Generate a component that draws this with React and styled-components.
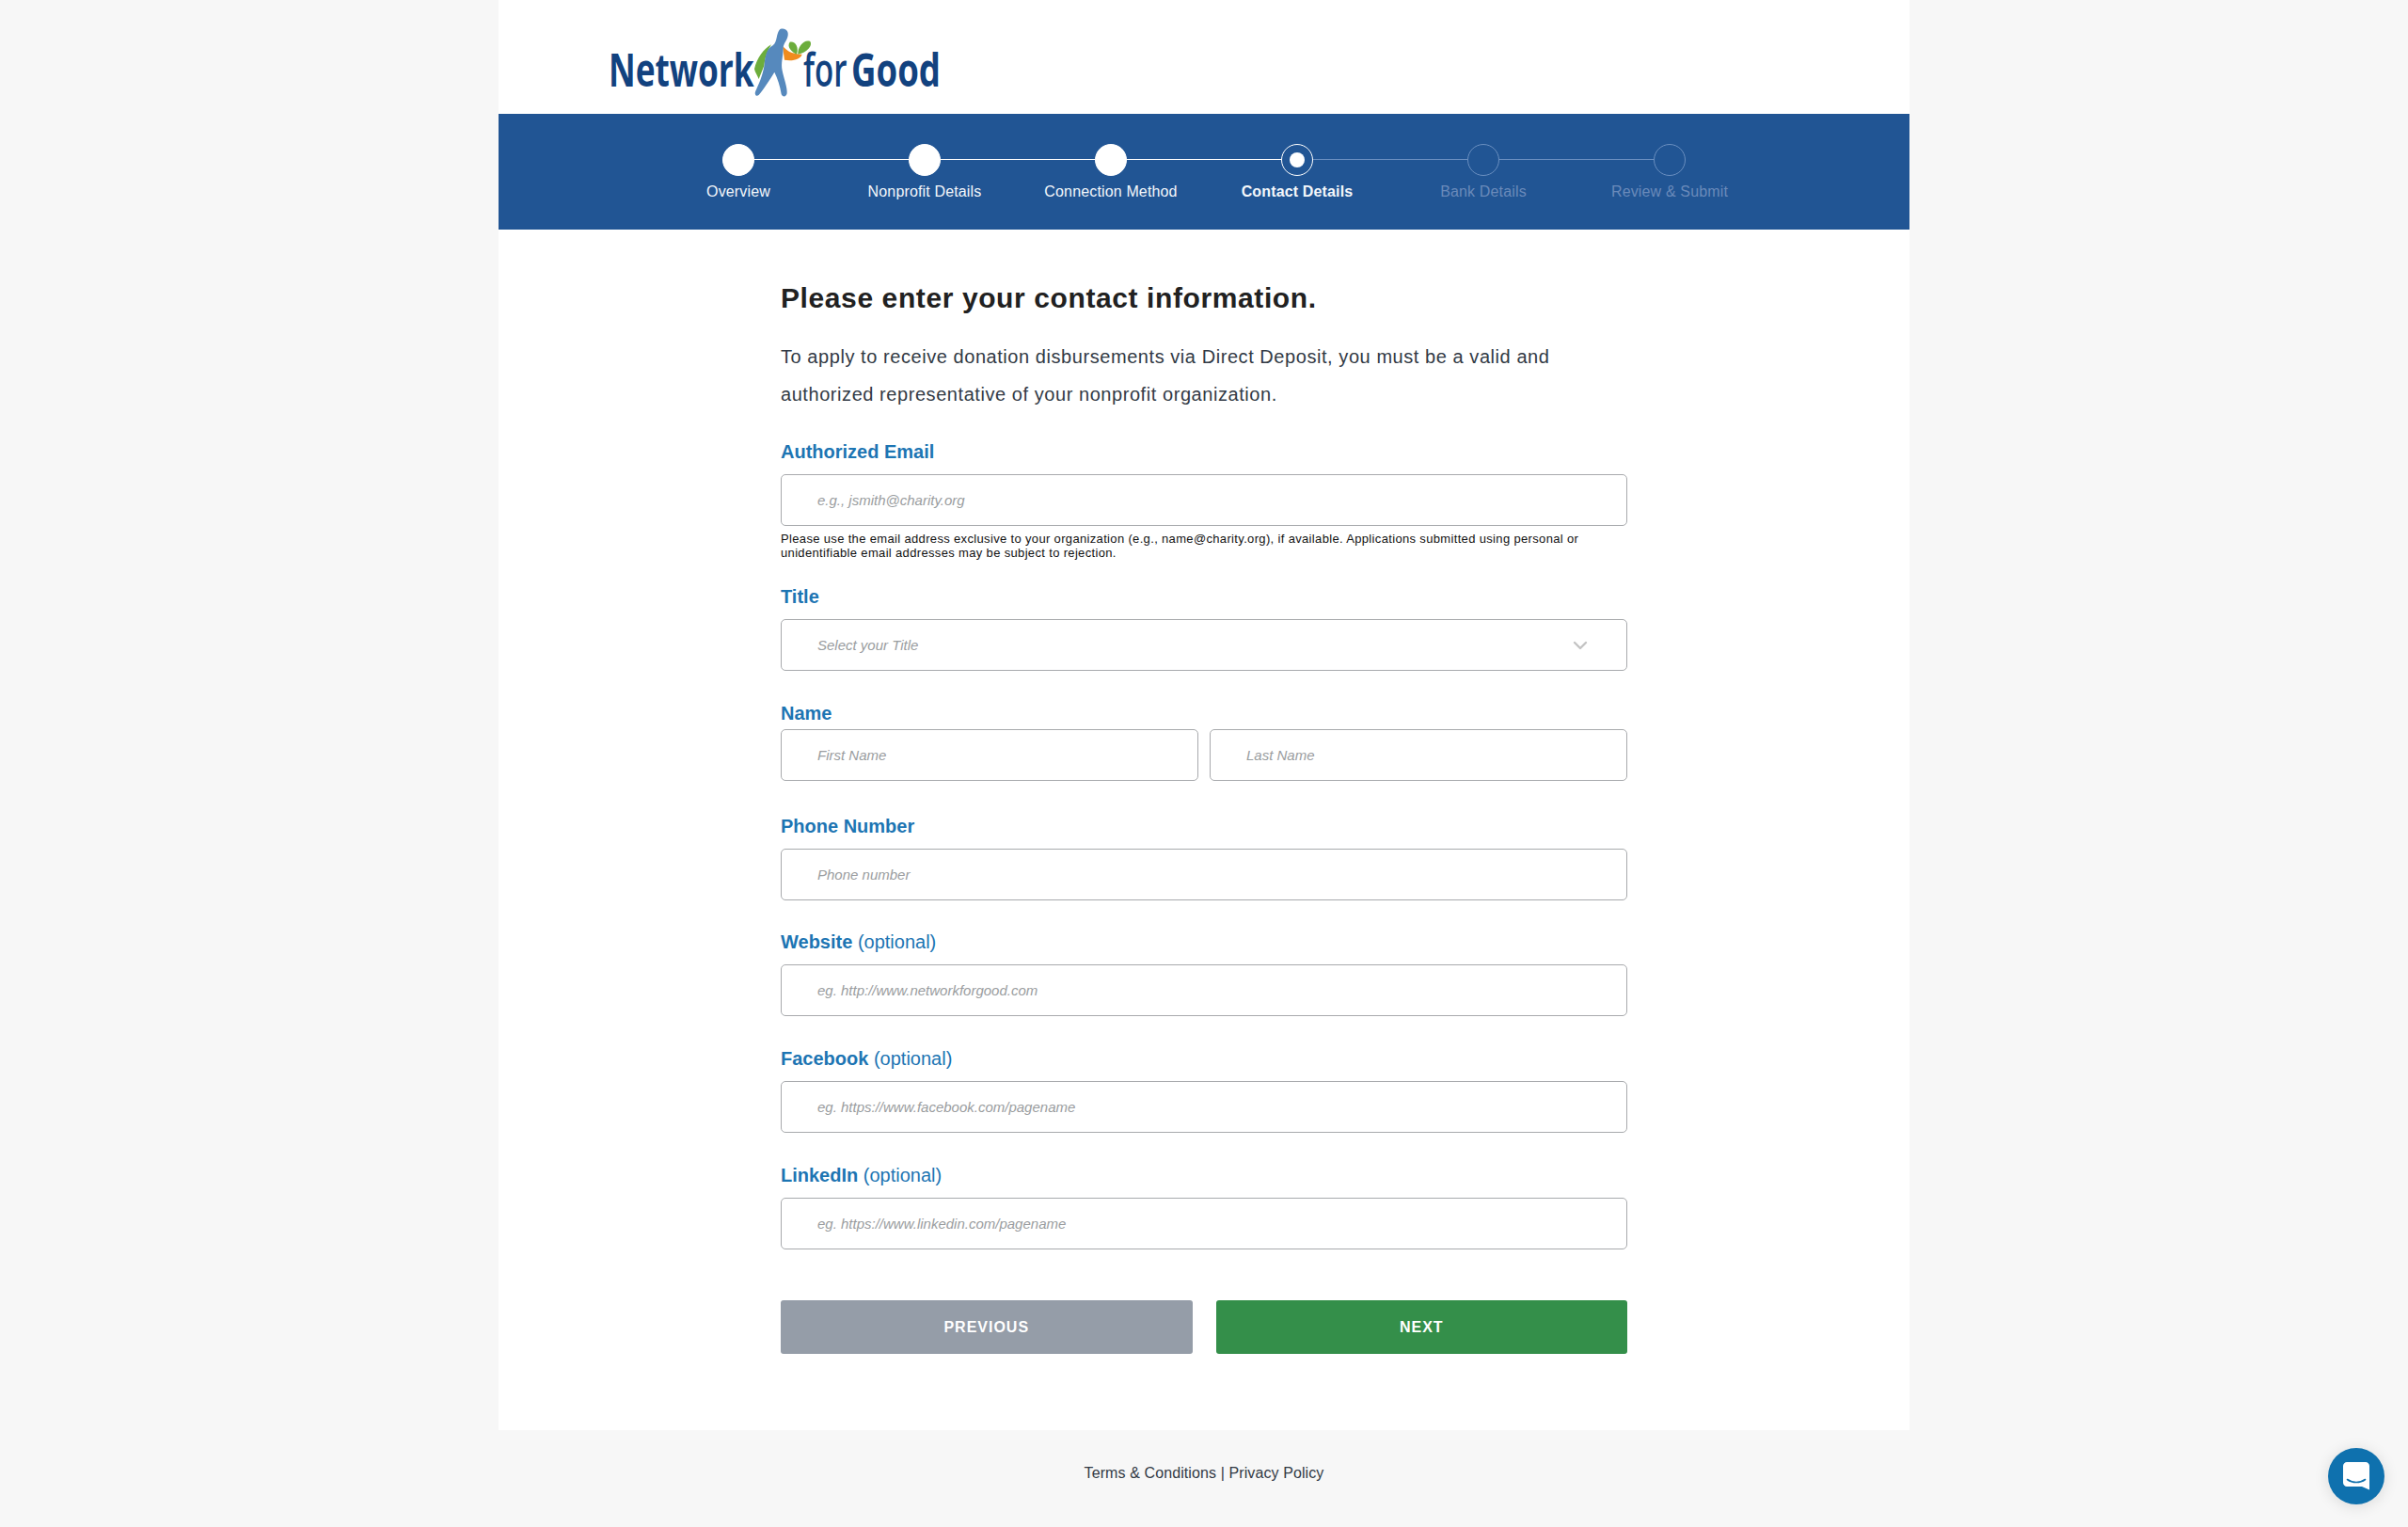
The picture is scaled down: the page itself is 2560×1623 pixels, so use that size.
import React from "react";
import styled, { createGlobalStyle } from "styled-components";
import { ChevronDown } from "lucide-react";

const GlobalStyle = createGlobalStyle`
  * { box-sizing: border-box; }
  html, body { margin: 0; background: #f7f7f7; }
  body { font-family: "Liberation Sans", Arial, sans-serif; }
`;

const steps = [
  { name: "Overview", state: "done" },
  { name: "Nonprofit Details", state: "done" },
  { name: "Connection Method", state: "done" },
  { name: "Contact Details", state: "current" },
  { name: "Bank Details", state: "todo" },
  { name: "Review & Submit", state: "todo" },
];

const Logo = () => (
  <StyledLogo viewBox="0 0 380 90" role="img" aria-label="Network for Good">
    <LogoText transform="translate(17 72) scale(0.735 1)" fontWeight="700">
      Network
    </LogoText>
    <LogoText transform="translate(224 72) scale(0.69 1)" fontWeight="600">
      for
    </LogoText>
    <LogoText transform="translate(275 72) scale(0.763 1)" fontWeight="700">
      Good
    </LogoText>
    <g transform="scale(0.3333)">
      <path d="M516 160C524 126 545 96 570 82C556 105 549 126 547 150L530 192C526 180 518 172 516 160Z" fill="#6cad3c" />
      <path d="M606 86C618 100 632 112 668 113C664 128 640 136 612 131Z" fill="#f08c1e" />
      <path d="M651 113C636 106 618 90 629 74C646 70 659 90 651 113Z" fill="#6cad3c" />
      <path d="M655 113C653 90 675 64 694 72C703 85 684 108 655 113Z" fill="#6cad3c" />
      <path
        d="M598 33C615 27 628 40 622 58C618 72 608 80 608 95C608 120 600 140 605 165C610 190 622 220 620 238C618 250 605 250 602 240C598 215 590 190 580 170C565 195 545 225 530 243C522 250 515 240 520 230C535 200 545 170 548 145C550 120 555 95 575 85C590 75 585 45 598 33Z"
        fill="#5689bd"
      />
    </g>
  </StyledLogo>
);

const TextField = ({ label, optional, placeholder, $top }) => (
  <Field $top={$top}>
    <Label>
      {label}
      {optional && <Optional> (optional)</Optional>}
    </Label>
    <Input placeholder={placeholder} />
  </Field>
);

const App = () => {
  return (
    <>
      <GlobalStyle />
      <Panel>
        <Header>
          <Logo />
        </Header>
        <Stepper>
          {steps.map((step, i) => (
            <Step key={step.name} $state={step.state} $last={i === steps.length - 1}>
              <Dot $state={step.state} />
              <StepName $state={step.state}>{step.name}</StepName>
            </Step>
          ))}
        </Stepper>
        <Main>
          <Heading>Please enter your contact information.</Heading>
          <Intro>
            To apply to receive donation disbursements via Direct Deposit, you must be a valid and
            authorized representative of your nonprofit organization.
          </Intro>
          <Field $top={29}>
            <Label>Authorized Email</Label>
            <Input placeholder="e.g., jsmith@charity.org" />
            <Hint>
              Please use the email address exclusive to your organization (e.g., name@charity.org), if
              available. Applications submitted using personal or unidentifiable email addresses may be
              subject to rejection.
            </Hint>
          </Field>
          <Field $top={27}>
            <Label>Title</Label>
            <SelectWrap>
              <Input as="div" $select>Select your Title</Input>
              <SelectArrow size={24} strokeWidth={2.4} />
            </SelectWrap>
          </Field>
          <Field>
            <Label $gap={5}>Name</Label>
            <NameRow>
              <Input placeholder="First Name" />
              <Input placeholder="Last Name" />
            </NameRow>
          </Field>
          <TextField $top={36} label="Phone Number" placeholder="Phone number" />
          <TextField $top={32} label="Website" optional placeholder="eg. http://www.networkforgood.com" />
          <TextField label="Facebook" optional placeholder="eg. https://www.facebook.com/pagename" />
          <TextField label="LinkedIn" optional placeholder="eg. https://www.linkedin.com/pagename" />
          <Buttons>
            <Button $bg="#959da8">Previous</Button>
            <Button $bg="#348f4a">Next</Button>
          </Buttons>
        </Main>
      </Panel>
      <Footer>Terms &amp; Conditions | Privacy Policy</Footer>
      <Chat aria-label="Open chat">
        <svg width="28" height="30" viewBox="0 0 28 30">
          <path
            d="M4 0H24C26 0 28 2 28 4V29.500L20 26H4C2 26 0 24 0 22V4C0 2 2 0 4 0Z"
            fill="#fff"
          />
          <path d="M4.500 18.500C10 22.500 18 22.500 23.500 18.500" fill="none" stroke="#0f71ae" strokeWidth="1.600" strokeLinecap="round" />
        </svg>
      </Chat>
    </>
  );
};

const Panel = styled.div`
  width: 1500px;
  margin: 0 auto;
  background: #fff;
`;

const Header = styled.header`
  height: 121px;
  padding: 20px 0 0 100px;
`;

const StyledLogo = styled.svg`
  display: block;
  width: 380px;
  height: 90px;
`;

const LogoText = styled.text`
  font-family: "Open Sans", "Liberation Sans", sans-serif;
  font-size: 48px;
  fill: #12427f;
`;

const Stepper = styled.nav`
  height: 123px;
  background: #215594;
  display: flex;
  justify-content: center;
  padding-top: 32px;
`;

const Step = styled.div`
  position: relative;
  width: 198px;
  display: flex;
  flex-direction: column;
  align-items: center;

  &::after {
    content: "";
    display: ${(p) => (p.$last ? "none" : "block")};
    position: absolute;
    top: 16px;
    left: calc(50% + 17px);
    width: 164px;
    height: 1px;
    background: ${(p) => (p.$state === "done" ? "#fff" : "#6a8fc0")};
  }
`;

const Dot = styled.span`
  width: 34px;
  height: 34px;
  border-radius: 50%;
  border: 1px solid ${(p) => (p.$state === "todo" ? "#6a8fc0" : "#fff")};
  background: ${(p) => (p.$state === "done" ? "#fff" : "transparent")};
  display: flex;
  align-items: center;
  justify-content: center;

  &::before {
    content: "";
    display: ${(p) => (p.$state === "current" ? "block" : "none")};
    width: 16px;
    height: 16px;
    border-radius: 50%;
    background: #fff;
  }
`;

const StepName = styled.span`
  margin-top: 7px;
  font-size: 16px;
  line-height: 20px;
  letter-spacing: 0.15px;
  white-space: nowrap;
  font-weight: ${(p) => (p.$state === "current" ? 700 : 400)};
  color: ${(p) => (p.$state === "todo" ? "#6a8aba" : "#f4f7fb")};
`;

const Main = styled.main`
  width: 900px;
  margin: 0 auto;
  padding: 54px 0 81px;
`;

const Heading = styled.h1`
  margin: 0;
  font-size: 30px;
  line-height: 37px;
  letter-spacing: 0.6px;
  font-weight: 700;
  color: #212121;
`;

const Intro = styled.p`
  margin: 24px 0 0;
  font-size: 20px;
  line-height: 40px;
  letter-spacing: 0.56px;
  color: #323a45;
`;

const Field = styled.div`
  margin-top: ${(p) => (p.$top === undefined ? 33 : p.$top)}px;
`;

const Label = styled.label`
  display: block;
  font-size: 20px;
  line-height: 24px;
  font-weight: 700;
  color: #1d75b3;
  margin-bottom: ${(p) => (p.$gap === undefined ? 12 : p.$gap)}px;
`;

const Optional = styled.span`
  font-weight: 400;
`;

const Input = styled.input`
  display: block;
  width: 100%;
  height: 55px;
  padding: 0 38px;
  border: 1px solid #a8aaad;
  border-radius: 5px;
  background: #fff;
  font: italic 15px/53px "Liberation Sans", sans-serif;
  color: #9a9da0;
  outline: none;

  &::placeholder {
    color: #9a9da0;
    opacity: 1;
  }
`;

const Hint = styled.p`
  margin: 6px 0 0;
  font-size: 13px;
  line-height: 15px;
  letter-spacing: 0.34px;
  color: #111;
`;

const SelectWrap = styled.div`
  position: relative;
`;

const SelectArrow = styled(ChevronDown)`
  position: absolute;
  right: 38px;
  top: 16px;
  color: #c4c4c4;
`;

const NameRow = styled.div`
  display: grid;
  grid-template-columns: 1fr 1fr;
  gap: 12px;
`;

const Buttons = styled.div`
  display: grid;
  grid-template-columns: 1fr 1fr;
  gap: 25px;
  margin-top: 54px;
`;

const Button = styled.button`
  height: 57px;
  border: 0;
  border-radius: 3px;
  background: ${(p) => p.$bg};
  color: #fff;
  font: 700 16px "Liberation Sans", sans-serif;
  letter-spacing: 1px;
  text-transform: uppercase;
`;

const Footer = styled.footer`
  height: 103px;
  padding-top: 34px;
  text-align: center;
  font-size: 16px;
  line-height: 24px;
  letter-spacing: 0.1px;
  color: #323a45;
`;

const Chat = styled.button`
  position: fixed;
  right: 25px;
  bottom: 24px;
  width: 60px;
  height: 60px;
  padding: 0;
  border: 0;
  border-radius: 50%;
  background: #0f71ae;
  box-shadow: 0 2px 16px rgba(0, 0, 0, 0.12);
  display: flex;
  align-items: center;
  justify-content: center;
`;

export default App;
